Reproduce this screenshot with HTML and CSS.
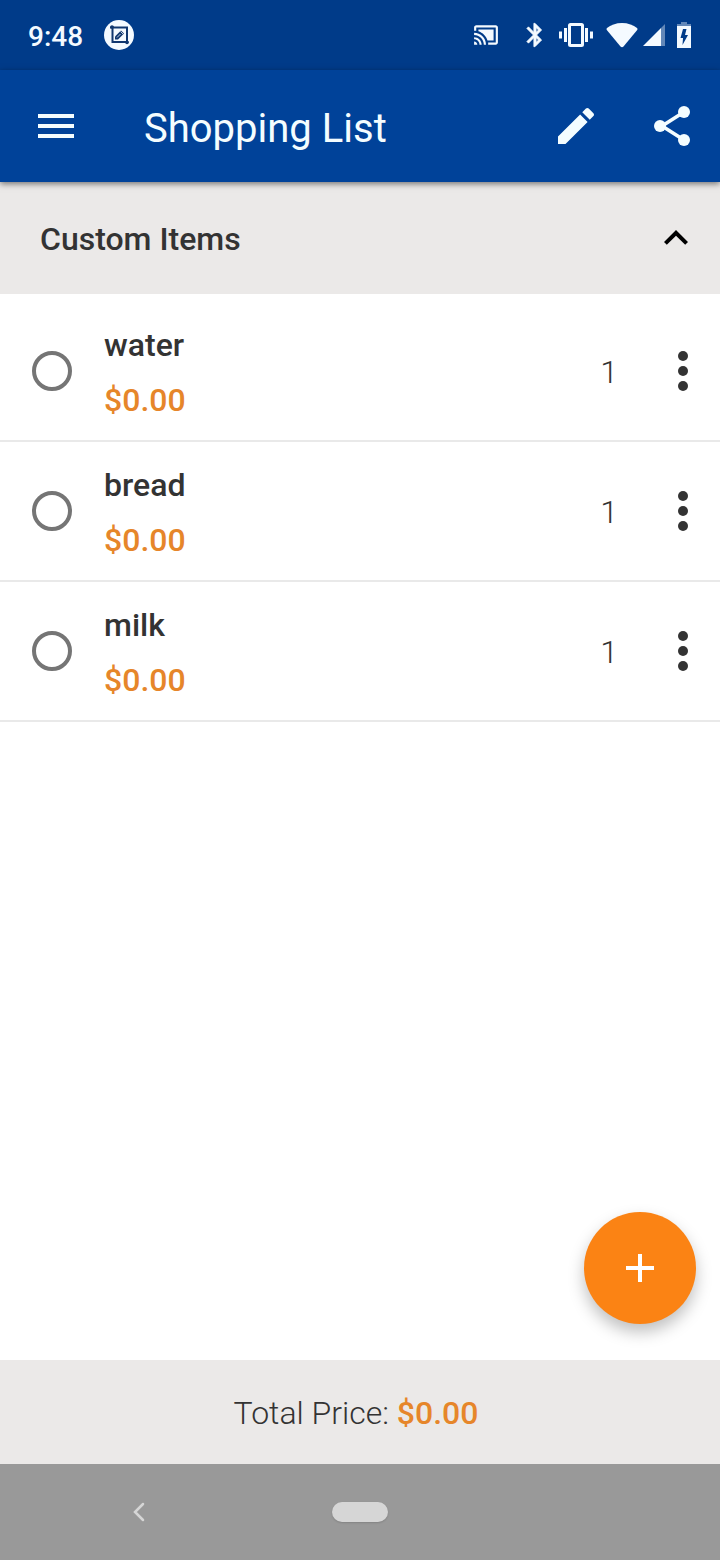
FILE: index.html
```html
<!DOCTYPE html>
<html lang="en">
<head>
  <meta charset="UTF-8" />
  <meta name="viewport" content="width=device-width, initial-scale=1.0"/>
  <title>Shopping List</title>
  <link rel="stylesheet" href="styles.css">
</head>
<body>
  <div class="status-bar">
    <span class="clock">9:48</span>
    <svg class="notice" width="30" height="30" viewBox="0 0 30 30">
      <circle cx="15" cy="15" r="15" fill="#f4faff"/>
      <path d="M6 7.500h17v15M8.500 6v16h16" fill="none" stroke="#10376f" stroke-width="2"/>
      <circle cx="8" cy="7" r="1.800" fill="#10376f"/>
      <circle cx="23" cy="22.500" r="1.800" fill="#10376f"/>
      <path d="M11 19.500v-3l6-6 3 3-6 6z" fill="#10376f"/>
      <path d="M13 17.500l3.500-3.500M16.500 11.500l2.500 2.500" stroke="#f4faff" stroke-width=".8"/>
    </svg>
    <div class="status-icons">
      <svg class="cast" width="26" height="26" viewBox="0 0 24 24"><path d="M1 18v3h3c0-1.660-1.340-3-3-3zm0-4v2c2.760 0 5 2.240 5 5h2c0-3.870-3.130-7-7-7zm18-7H5v1.630c3.960 1.280 7.090 4.410 8.370 8.370H19V7zM1 10v2c4.970 0 9 4.030 9 9h2c0-6.080-4.930-11-11-11zm20-7H3c-1.100 0-2 .900-2 2v3h2V5h18v14h-7v2h7c1.100 0 2-.900 2-2V5c0-1.100-.900-2-2-2z"/></svg>
      <svg class="bluetooth" width="28" height="28" viewBox="0 0 24 24"><path d="M17.710 7.710L12 2h-1v7.590L6.410 5 5 6.410 10.590 12 5 17.590 6.410 19 11 14.410V22h1l5.710-5.710-4.300-4.290 4.300-4.290zM13 5.830l1.880 1.880L13 9.590V5.830zm1.880 10.460L13 18.170v-3.760l1.880 1.880z" stroke="currentColor" stroke-width=".6" stroke-linejoin="round"/></svg>
      <svg class="vibrate" width="34" height="34" viewBox="0 0 34 34"><path d="M0 13.500h3v7H0zM5 10h3v14H5zM31 13.500h3v7h-3zM26 10h3v14h-3z"/><rect x="10.500" y="6.500" width="13" height="21" rx="1" fill="none" stroke="currentColor" stroke-width="3"/></svg>
      <svg class="wifi" width="32" height="26" viewBox="0 0 32 26"><path d="M16 1C10 1 4.500 3 1 6Q0 7 .800 8L14.500 24.500Q16 26 17.500 24.500L31.200 8Q32 7 31 6C27.500 3 22 1 16 1z"/></svg>
      <svg class="signal" width="22" height="22" viewBox="0 0 22 22"><path d="M22 0v22h-4V4z" opacity=".4"/><path d="M0 22L18 4v18z"/></svg>
      <svg width="16" height="26" viewBox="0 0 16 26"><path d="M5 0h6v2h4v3H1V2h4z" opacity=".4"/><path fill-rule="evenodd" d="M1 4h14v22H1zM7 7l-2.500 9H7l-.500 7 5.500-10H9l1.500-6z"/></svg>
    </div>
  </div>

  <header class="app-bar">
    <button class="icon-btn" aria-label="Menu">
      <svg width="48" height="48" viewBox="0 0 24 24"><path d="M3 18h18v-2H3v2zm0-5h18v-2H3v2zm0-7v2h18V6H3z"/></svg>
    </button>
    <h1>Shopping List</h1>
    <button class="icon-btn" aria-label="Edit">
      <svg width="48" height="48" viewBox="0 0 24 24"><path d="M3 17.250V21h3.750L17.810 9.940l-3.750-3.750L3 17.250zM20.710 7.040c.390-.390.390-1.020 0-1.410l-2.340-2.340c-.390-.390-1.020-.390-1.410 0l-1.830 1.830 3.750 3.750 1.830-1.830z"/></svg>
    </button>
    <button class="icon-btn" aria-label="Share">
      <svg width="48" height="48" viewBox="0 0 24 24"><path d="M7 12l11-7M7 12l11 7" fill="none" stroke="currentColor" stroke-width="1.800"/><circle cx="18" cy="5" r="3"/><circle cx="6" cy="12" r="3"/><circle cx="18" cy="19" r="3"/></svg>
    </button>
  </header>

  <main>
    <div class="section-header">
      <h2>Custom Items</h2>
      <button class="icon-btn" aria-label="Collapse" aria-expanded="true">
        <svg width="48" height="48" viewBox="0 0 24 24"><path d="M12 8l-6 6 1.410 1.410L12 10.830l4.590 4.580L18 14z"/></svg>
      </button>
    </div>

    <ul class="items">
      <li class="item">
        <input type="checkbox" id="water">
        <label for="water">
          <span class="name">water</span>
          <span class="price">$0.00</span>
        </label>
        <span class="qty">1</span>
        <button class="more" aria-label="More">
          <svg width="10" height="40" viewBox="0 0 10 40"><circle cx="5" cy="5" r="5"/><circle cx="5" cy="20" r="5"/><circle cx="5" cy="35" r="5"/></svg>
        </button>
      </li>
      <li class="item">
        <input type="checkbox" id="bread">
        <label for="bread">
          <span class="name">bread</span>
          <span class="price">$0.00</span>
        </label>
        <span class="qty">1</span>
        <button class="more" aria-label="More">
          <svg width="10" height="40" viewBox="0 0 10 40"><circle cx="5" cy="5" r="5"/><circle cx="5" cy="20" r="5"/><circle cx="5" cy="35" r="5"/></svg>
        </button>
      </li>
      <li class="item">
        <input type="checkbox" id="milk">
        <label for="milk">
          <span class="name">milk</span>
          <span class="price">$0.00</span>
        </label>
        <span class="qty">1</span>
        <button class="more" aria-label="More">
          <svg width="10" height="40" viewBox="0 0 10 40"><circle cx="5" cy="5" r="5"/><circle cx="5" cy="20" r="5"/><circle cx="5" cy="35" r="5"/></svg>
        </button>
      </li>
    </ul>

    <button class="fab" aria-label="Add item">
      <svg width="48" height="48" viewBox="0 0 24 24"><path d="M19 13h-6v6h-2v-6H5v-2h6V5h2v6h6v2z"/></svg>
    </button>
  </main>

  <footer class="total">
    <span>Total Price: <span class="price">$0.00</span></span>
  </footer>

  <nav class="nav-bar">
    <button class="back" aria-label="Back">
      <svg width="14" height="20" viewBox="0 0 14 20"><path d="M11 2L3 10l8 8" fill="none" stroke="#d6d6d6" stroke-width="2.500" stroke-linecap="round"/></svg>
    </button>
    <button class="home" aria-label="Home"></button>
  </nav>
</body>
</html>
```

FILE: styles.css
```css
* {
  box-sizing: border-box;
}
body {
  margin: 0;
  min-height: 100vh;
  display: flex;
  flex-direction: column;
  font-family: Roboto, "Liberation Sans", sans-serif;
  font-size: 32px;
  color: #333;
  background: white;
}
button {
  padding: 0;
  border: none;
  background: none;
  color: inherit;
  cursor: pointer;
}
svg {
  display: block;
  fill: currentColor;
}
h1, h2 {
  flex: 1;
  margin: 0;
}

/* status bar */
.status-bar {
  display: flex;
  align-items: center;
  height: 70px;
  padding: 0 28px;
  background: #003b89;
  color: #f4faff;
}
.clock {
  padding-top: 2px;
  font-size: 28px;
  font-weight: 500;
}
.notice {
  margin-left: 21px;
}
.status-icons {
  display: flex;
  align-items: center;
  margin-left: auto;
}
.cast {
  margin-right: 22px;
}
.bluetooth {
  margin-right: 10px;
}
.vibrate {
  margin-right: 13px;
}
.wifi {
  margin-right: 5px;
}
.signal {
  margin-right: 11px;
}

/* app bar */
.app-bar {
  position: relative;
  z-index: 1;
  display: flex;
  align-items: center;
  gap: 48px;
  height: 112px;
  padding: 0 24px 0 32px;
  background: #004299;
  color: #f4fdff;
  box-shadow: 0 2px 6px rgba(0,0,0,0.5);
}
.app-bar h1 {
  margin-left: 16px;
  padding-top: 4px;
  font-size: 40px;
  font-weight: 400;
}

/* list */
main {
  flex: 1;
  position: relative;
}
.section-header {
  display: flex;
  align-items: center;
  height: 112px;
  padding: 0 20px 0 40px;
  background: #ebe9e8;
}
.section-header h2 {
  padding-top: 2px;
  font-size: 32px;
  font-weight: 500;
}
.section-header .icon-btn {
  color: black;
}
.items {
  list-style: none;
  margin: 0;
  padding: 8px 0 0;
}
.item {
  display: flex;
  align-items: center;
  height: 140px;
  padding: 0 32px;
  border-bottom: 2px solid #e9e9e9;
}
.item input {
  appearance: none;
  width: 40px;
  height: 40px;
  margin: 0 32px 0 0;
  border: 4px solid #757575;
  border-radius: 50%;
}
.item input:checked {
  background: #757575;
}
.item label {
  flex: 1;
  padding-top: 4px;
}
.name, .item .price {
  display: block;
  line-height: 55px;
}
.name {
  font-weight: 500;
}
.price {
  color: #e6862a;
  font-weight: 500;
}
.qty {
  margin-right: 60px;
  padding-top: 2px;
  font-weight: 300;
}

.fab {
  position: absolute;
  right: 24px;
  bottom: 36px;
  display: grid;
  place-items: center;
  width: 112px;
  height: 112px;
  border-radius: 50%;
  background: #fb8314;
  color: white;
  box-shadow: 0 8px 16px rgba(0,0,0,0.25);
}

.total {
  display: flex;
  align-items: center;
  justify-content: center;
  height: 104px;
  padding: 2px 8px 0 0;
  background: #ebe9e8;
  font-weight: 300;
}

/* system navigation */
.nav-bar {
  display: grid;
  grid-template-columns: 1fr 56px 1fr;
  align-items: center;
  height: 96px;
  background: #999;
}
.back {
  justify-self: end;
  margin-right: 186px;
}
.home {
  height: 20px;
  border-radius: 10px;
  background: #d6d6d6;
  box-shadow: 0 1px 2px rgba(0,0,0,0.15);
}
```
